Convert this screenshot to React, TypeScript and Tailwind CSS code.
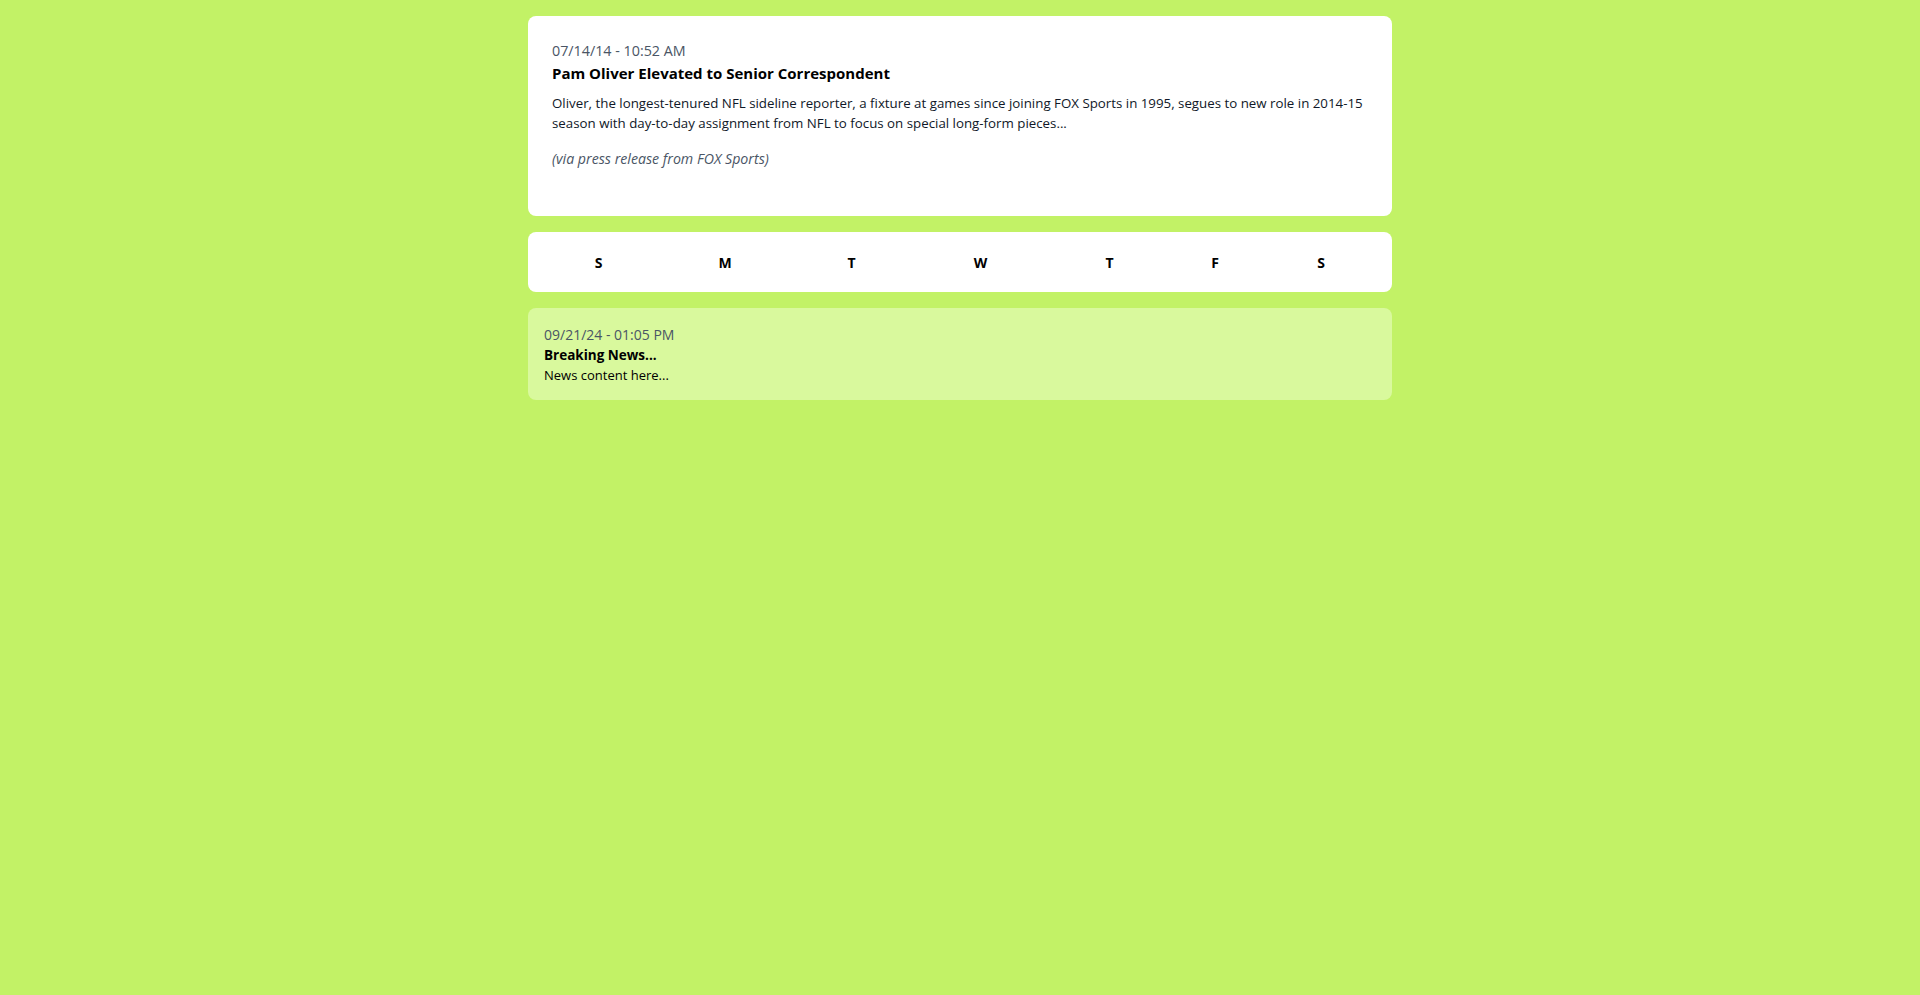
import React from "react";

const days = ["S", "M", "T", "W", "T", "F", "S"];

const App: React.FC = () => {
  return (
    <div
      className="min-h-screen bg-[#c2f266] text-black"
      style={{ fontFamily: '"Segoe UI", "Open Sans", sans-serif' }}
    >
      <div className="max-w-4xl mx-auto p-4 flex flex-col gap-4">
        {/* featured story */}
        <div className="bg-white rounded-lg px-6 pt-[25px] pb-[47px]">
          <p className="text-[14.3px] leading-5 text-gray-600">07/14/14 - 10:52 AM</p>
          <h2 className="text-[15px] leading-6 font-bold mb-2">
            Pam Oliver Elevated to Senior Correspondent
          </h2>
          <p className="text-[13.3px] leading-5 text-gray-900">
            Oliver, the longest-tenured NFL sideline reporter, a fixture at games since joining FOX
            Sports in 1995, segues to new role in 2014-15 season with day-to-day assignment from NFL
            to focus on special long-form pieces...
          </p>
          <p className="mt-4 text-[14.2px] leading-5 italic text-gray-600">
            (via press release from FOX Sports)
          </p>
        </div>

        {/* week header */}
        <div className="bg-white rounded-lg px-4 pt-[17px] pb-[15px]">
          <div className="grid grid-cols-[109px_144px_109px_149px_109px_102px_110px]">
            {days.map((d, i) => (
              <div key={i} className="py-1 text-center text-sm leading-5 font-bold">
                {d}
              </div>
            ))}
          </div>
        </div>

        {/* latest item */}
        <div className="bg-[#d9f99d] rounded-lg px-4 pt-[17px] pb-[15px]">
          <p className="text-sm leading-5 text-gray-600">09/21/24 - 01:05 PM</p>
          <h3 className="text-[13.5px] leading-5 font-bold">Breaking News...</h3>
          <p className="text-[13px] leading-5">News content here...</p>
        </div>
      </div>
    </div>
  );
};

export default App;
